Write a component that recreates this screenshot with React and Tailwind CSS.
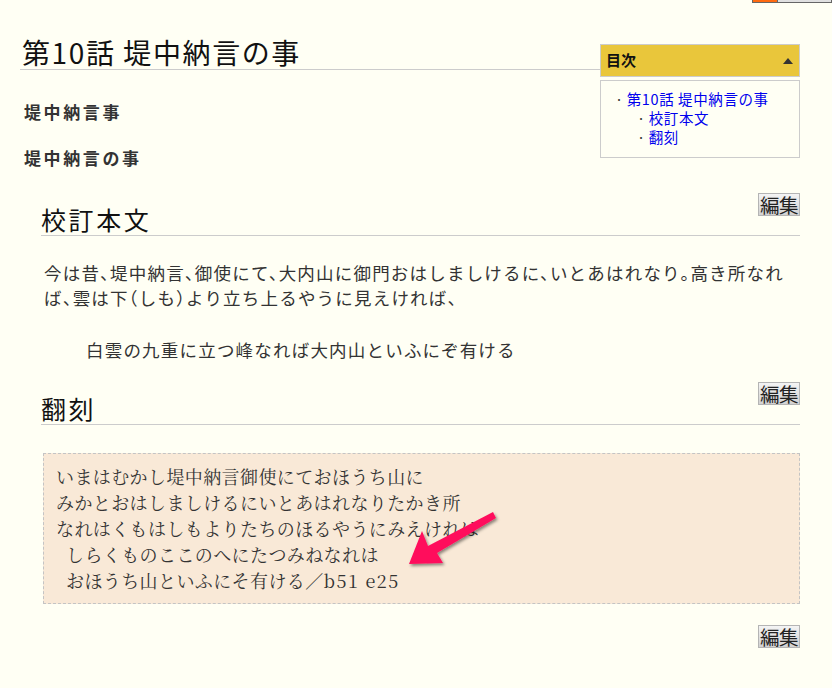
import React from "react";

const sans = { fontFamily: '"Noto Sans CJK JP", "Noto Sans", sans-serif' };
const serif = { fontFamily: '"Noto Serif CJK JP", "Liberation Serif", "Noto Sans CJK JP", serif' };

function EditButton() {
  return (
    <span className="inline-flex h-[23px] w-[42px] items-center justify-center border border-[#b4b4b4] bg-gradient-to-b from-[#f4f4f4] to-[#d2d2d2] text-[19.5px] leading-none tracking-[-0.5px] text-[#222]">
      編集
    </span>
  );
}

function SectionHead({ title }) {
  return (
    <h2 className="flex items-start justify-between border-b border-[#cccccc]">
      <span className="pt-[11px] text-[25px] leading-[31px] tracking-[2.6px] text-[#111]">{title}</span>
      <EditButton />
    </h2>
  );
}

export default function App() {
  return (
    <div className="relative min-h-[688px] w-[832px] overflow-hidden bg-[#fffff4]" style={sans}>
      <div className="absolute left-[752px] top-[-11px] flex h-[14px] w-[80px] border border-[#666] bg-[#e0e0e0]">
        <div className="h-full w-[24px] bg-[#ff6a10]"></div>
        <div className="h-full w-px bg-[#666]"></div>
      </div>

      <div className="ml-[20px] w-[780px] pt-[35px]">
        <div className="flex items-start">
          <div className="flex-1">
            <h1 className="h-[35px] border-b border-[#cccccc] pl-[2px] text-[28px] leading-[34px] tracking-[1.6px] text-[#111]">
              第10話 堤中納言の事
            </h1>
            <div className="mt-[30px] pl-[4px] text-[17px] font-bold leading-[24px] tracking-[2.6px] text-[#333]">堤中納言事</div>
            <div className="mt-[22px] pl-[4px] text-[17px] font-bold leading-[24px] tracking-[2.6px] text-[#333]">堤中納言の事</div>
          </div>
          <div className="mt-[9px] w-[200px]">
            <div className="flex h-[33px] items-center justify-between border border-[#cccccc] bg-[#e9c63b] pl-[5px] pr-[6px]">
              <span className="text-[15px] font-bold text-[#111]">目次</span>
              <span className="h-0 w-0 border-x-[5px] border-b-[6px] border-x-transparent border-b-[#333]"></span>
            </div>
            <div className="mt-[3px] border border-[#cccccc] pb-[11px] pt-[8px] text-[14.5px] leading-[19px] tracking-[0.6px]">
              <div className="pl-[14px] text-[#0000ee]"><span className="mr-[3px] text-[#333]">·</span>第10話 堤中納言の事</div>
              <div className="pl-[36px] text-[#0000ee]"><span className="mr-[3px] text-[#333]">·</span>校訂本文</div>
              <div className="pl-[36px] text-[#0000ee]"><span className="mr-[3px] text-[#333]">·</span>翻刻</div>
            </div>
          </div>
        </div>

        <div className="ml-[21px] mt-[23px]">
          <SectionHead title="校訂本文" />
          <p className="mt-[24px] pl-[3px] text-[17.5px] leading-[25px] tracking-[1.2px] text-[#333] [font-feature-settings:'halt']">
            今は昔、堤中納言、御使にて、大内山に御門おはしましけるに、いとあはれなり。高き所なれ<br />
            ば、雲は下（しも）より立ち上るやうに見えければ、
          </p>
          <p className="mt-[27px] pl-[45px] text-[17.5px] leading-[25px] tracking-[1.2px] text-[#333]">
            白雲の九重に立つ峰なれば大内山といふにぞ有ける
          </p>

          <div className="mt-[20px]">
            <SectionHead title="翻刻" />
          </div>

          <div className="ml-[2px] mt-[28px] border border-dashed border-[#c4c4c4] bg-[#f9e9d7] pb-[10px] pl-[12px] pt-[9px] text-[18px] leading-[26px] tracking-[0.4px] text-[#333]" style={serif}>
            <div>いまはむかし堤中納言御使にておほうち山に</div>
            <div>みかとおはしましけるにいとあはれなりたかき所</div>
            <div>なれはくもはしもよりたちのほるやうにみえけれは</div>
            <div className="pl-[10px]">しらくものここのへにたつみねなれは</div>
            <div className="pl-[10px]">おほうち山といふにそ有ける／<span className="tracking-[1.5px]">b51 e25</span></div>
          </div>

          <div className="mt-[21px] flex justify-end">
            <EditButton />
          </div>
        </div>
      </div>

      <svg className="absolute left-0 top-0" width="832" height="688" viewBox="0 0 832 688" style={{ pointerEvents: "none" }}>
        <defs>
          <filter id="sh" x="-20%" y="-20%" width="140%" height="140%">
            <feDropShadow dx="1.5" dy="2" stdDeviation="1.6" floodColor="#000" floodOpacity="0.45" />
          </filter>
        </defs>
        <path d="M493,512 L496,518 L437,553 L443,563 L409,564 L422,531 L428,546 Z" fill="#ff0f5c" filter="url(#sh)" />
      </svg>
    </div>
  );
}
